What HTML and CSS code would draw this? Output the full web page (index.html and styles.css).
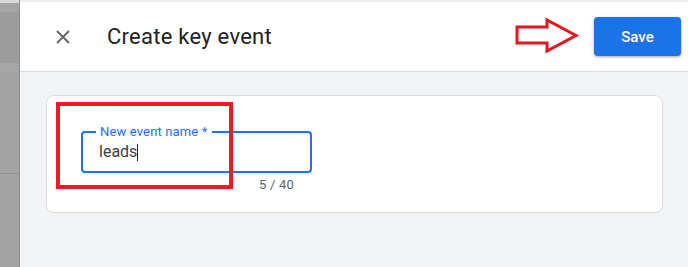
FILE: index.html
```html
<!DOCTYPE html>
<html>
<head>
<meta charset="utf-8">
<link rel="stylesheet" href="styles.css">
</head>
<body>
<div class="page">
  <div class="side">
    <div class="band b1"></div>
    <div class="band b2"></div>
    <div class="band b3"></div>
    <div class="band b4"></div>
    <div class="band b5"></div>
    <div class="band b6"></div>
  </div>
  <div class="dialog">
    <header class="header">
      <div class="head-left">
        <svg class="close" viewBox="0 0 14 14" width="14" height="14">
          <path d="M1 1 L13 13 M13 1 L1 13" stroke="#5f6368" stroke-width="1.8" fill="none"/>
        </svg>
        <h1 class="title">Create key event</h1>
      </div>
      <button class="save">Save</button>
    </header>
    <main class="content">
      <section class="card">
        <div class="field">
          <span class="label">New event name *</span>
          <span class="value">leads</span><span class="caret"></span>
        </div>
        <div class="counter">5 / 40</div>
      </section>
    </main>
  </div>
</div>
<svg class="arrow" viewBox="0 0 66 38" width="66" height="38">
  <polygon points="3,10 33,10 33,3 62,18.5 33,34 33,26 3,26" fill="#fff" stroke="#e8141c" stroke-width="3" stroke-linejoin="miter"/>
</svg>
<div class="highlight"></div>
</body>
</html>
```

FILE: styles.css
```css
html, body {
  margin: 0;
  padding: 0;
  width: 688px;
  height: 267px;
  overflow: hidden;
  font-family: Roboto, "Liberation Sans", Arial, sans-serif;
}

.page {
  display: flex;
  width: 688px;
  height: 267px;
}

.side {
  width: 19px;
  border-right: 1px solid #8c8c8c;
  display: flex;
  flex-direction: column;
  background: #a2a2a2;
}
.band { width: 100%; }
.b1 { height: 3px; background: #d9d9d9; }
.b2 { height: 9px; background: #a5a5a5; }
.b3 { height: 51px; background: #9c9c9c; }
.b4 { height: 9px; background: #a6a6a6; }
.b5 { height: 101px; background: #a3a3a3; border-bottom: 1px solid #8f8f8f; }
.b6 { flex: 1; background: #a3a3a3; }

.dialog {
  flex: 1;
  background: #f1f3f4;
  border-top: 2px solid #ececec;
  display: flex;
  flex-direction: column;
}

.header {
  height: 69px;
  background: #fff;
  border-bottom: 1px solid #dadce0;
  display: flex;
  align-items: center;
  justify-content: space-between;
  padding: 0 7px 0 36px;
}
.head-left {
  display: flex;
  align-items: center;
}
.close {
  display: block;
  margin-right: 37px;
}
.title {
  margin: 0;
  font-size: 22px;
  font-weight: 400;
  color: #202124;
  letter-spacing: 0.25px;
}
.save {
  width: 87px;
  height: 39px;
  border: none;
  border-radius: 4px;
  background: #1a73e8;
  color: #fff;
  font-family: Roboto, "Liberation Sans", Arial, sans-serif;
  font-size: 15px;
  font-weight: 500;
  box-shadow: 0 1px 2px rgba(60,64,67,.3), 0 1px 3px 1px rgba(60,64,67,.15);
}

.content {
  padding: 23px 25px 0 26px;
}
.card {
  background: #fff;
  border: 1px solid #dadce0;
  border-radius: 8px;
  padding: 35px 0 0 34px;
  box-sizing: border-box;
  height: 118px;
}
.field {
  position: relative;
  width: 231px;
  height: 42px;
  box-sizing: border-box;
  border: 2px solid #1a73e8;
  border-radius: 4px;
  padding: 9px 16px 0 16px;
  display: flex;
  align-items: flex-start;
}
.label {
  position: absolute;
  top: -9px;
  left: 13px;
  padding: 0 4px;
  background: #fff;
  color: #1a73e8;
  font-size: 13px;
  letter-spacing: 0.15px;
  line-height: 15px;
}
.value {
  font-size: 16px;
  line-height: 20px;
  color: #3c4043;
}
.caret {
  display: inline-block;
  width: 1px;
  height: 17px;
  margin-top: 2px;
  background: #202124;
}
.counter {
  width: 213px;
  text-align: right;
  font-size: 13px;
  letter-spacing: 0.2px;
  color: #5f6368;
  margin-top: 4px;
  line-height: 15px;
}

.arrow {
  position: absolute;
  left: 514px;
  top: 17px;
}
.highlight {
  position: absolute;
  left: 56px;
  top: 102px;
  width: 177px;
  height: 87px;
  box-sizing: border-box;
  border: 4px solid #ed1c24;
}
```
